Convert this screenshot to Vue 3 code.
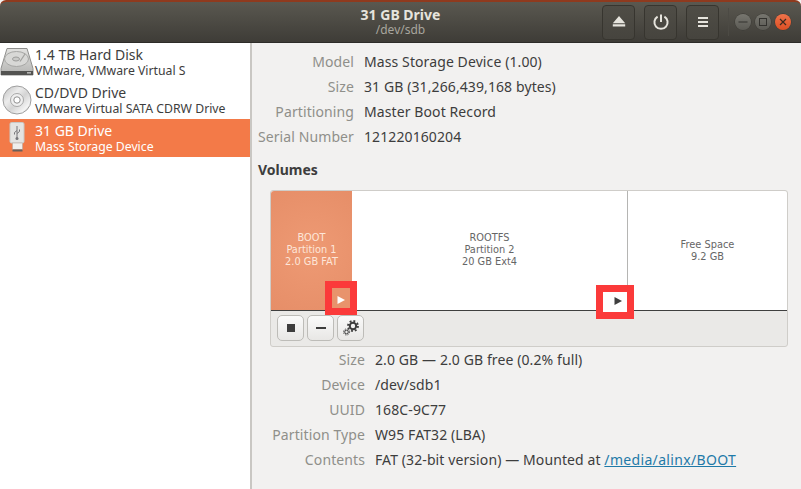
<template>
  <div class="window">
    <header class="titlebar">
      <div class="title-spacer"></div>
      <div class="title">
        <div class="title-main">31 GB Drive</div>
        <div class="title-sub">/dev/sdb</div>
      </div>
      <div class="title-actions">
        <button class="hbtn">
          <svg width="16" height="16" viewBox="0 0 16 16"><path d="M8 2 14.2 9.2H1.8Z M1.8 10.2H14.2V12.4H1.8Z" fill="#e6e4dd"/></svg>
        </button>
        <button class="hbtn">
          <svg width="18" height="18" viewBox="0 0 18 18" fill="none" stroke="#e6e4dd" stroke-width="2"><path d="M5.6 3.6a6.6 6.6 0 1 0 6.8 0"/><path d="M9 1.5V9"/></svg>
        </button>
        <button class="hbtn">
          <svg width="16" height="16" viewBox="0 0 16 16" fill="#e6e4dd"><rect x="3" y="3" width="10" height="2"/><rect x="3" y="7" width="10" height="2"/><rect x="3" y="11" width="10" height="2"/></svg>
        </button>
        <div class="hsep"></div>
        <div class="wm">
          <span class="wm-btn"><svg width="16" height="16" viewBox="0 0 16 16"><rect x="3.5" y="7.5" width="9" height="1" fill="#33322e"/></svg></span>
          <span class="wm-btn"><svg width="16" height="16" viewBox="0 0 16 16"><rect x="4.5" y="4.5" width="7" height="7" fill="none" stroke="#33322e"/></svg></span>
          <span class="wm-btn wm-close"><svg width="16" height="16" viewBox="0 0 16 16"><path d="M5 5 11 11M11 5 5 11" stroke="#3c2a20" stroke-width="1.2"/></svg></span>
        </div>
      </div>
    </header>

    <div class="body">
      <aside class="sidebar">
        <div v-for="d in drives" :key="d.name" class="drive" :class="{ selected: d.selected }">
          <div class="drive-icon">
            <svg v-if="d.icon === 'hdd'" width="34" height="34" viewBox="0 0 34 34">
              <defs>
                <linearGradient id="hddBody" x1="0" y1="0" x2="0" y2="1">
                  <stop offset="0" stop-color="#e2e2e0"/>
                  <stop offset="1" stop-color="#b4b4b2"/>
                </linearGradient>
              </defs>
              <path d="M7 3.5H27L33 23.5V30H1V23.5Z" fill="url(#hddBody)" stroke="#8f8f8d"/>
              <ellipse cx="16.5" cy="14" rx="12" ry="7.5" fill="#d8d8d6" stroke="#a6a6a4"/>
              <ellipse cx="16" cy="14" rx="3.5" ry="2" fill="#cacac8" stroke="#9c9c9a"/>
              <path d="M25 9 20 16.5" stroke="#a0a09e" stroke-width="1.2"/>
              <rect x="1" y="26" width="32" height="4" fill="#535351"/>
              <rect x="27" y="27" width="4" height="1.6" fill="#b5b5b3"/>
            </svg>
            <svg v-else-if="d.icon === 'cd'" width="34" height="34" viewBox="0 0 34 34">
              <defs>
                <linearGradient id="disc" x1="0" y1="0" x2="1" y2="1">
                  <stop offset="0" stop-color="#bdbdbd"/>
                  <stop offset=".35" stop-color="#ececec"/>
                  <stop offset=".55" stop-color="#d4d4d4"/>
                  <stop offset=".8" stop-color="#f4f4f4"/>
                  <stop offset="1" stop-color="#b8b8b8"/>
                </linearGradient>
              </defs>
              <circle cx="17" cy="17" r="14" fill="url(#disc)" stroke="#9f9f9f"/>
              <circle cx="17" cy="17" r="6.5" fill="#efefef" stroke="#a8a8a8"/>
              <circle cx="17" cy="17" r="3.2" fill="#fff" stroke="#8f8f8f"/>
            </svg>
            <svg v-else width="34" height="34" viewBox="0 0 34 34">
              <rect x="10" y="1.5" width="14" height="20.5" rx="1.5" fill="#e4e4e2" stroke="#c8c8c6"/>
              <path d="M17 5V17M17 9.5 14.5 11.5V13.5M17 12.5 19.5 10.5V8.5" fill="none" stroke="#77777a" stroke-width="1"/>
              <circle cx="17" cy="17.5" r="1.5" fill="#77777a"/>
              <rect x="12.5" y="22" width="10" height="6.5" fill="#efefed" stroke="#b8a89e" stroke-width=".6"/>
              <rect x="12.5" y="28.5" width="10" height="2" fill="#6a5f59"/>
            </svg>
          </div>
          <div class="drive-text">
            <div class="drive-name">{{ d.name }}</div>
            <div class="drive-desc">{{ d.desc }}</div>
          </div>
        </div>
      </aside>

      <main class="content">
        <section class="props">
          <template v-for="p in driveProps" :key="p.label">
            <div class="prop-label">{{ p.label }}</div>
            <div class="prop-value">{{ p.value }}</div>
          </template>
        </section>

        <h2 class="volumes-title">Volumes</h2>

        <div class="volumes">
          <div class="graph">
            <div class="seg seg-boot">
              <div>BOOT</div>
              <div>Partition 1</div>
              <div>2.0 GB FAT</div>
            </div>
            <div class="seg seg-root">
              <div>ROOTFS</div>
              <div>Partition 2</div>
              <div>20 GB Ext4</div>
            </div>
            <div class="seg seg-free">
              <div>Free Space</div>
              <div>9.2 GB</div>
            </div>
          </div>
          <div class="toolbar">
            <button class="tbtn">
              <svg width="16" height="16" viewBox="0 0 16 16"><rect x="4" y="4" width="8" height="8" fill="#3d3d3d"/></svg>
            </button>
            <button class="tbtn">
              <svg width="16" height="16" viewBox="0 0 16 16"><rect x="3" y="7" width="10" height="2" fill="#3d3d3d"/></svg>
            </button>
            <button class="tbtn">
              <svg width="18" height="18" viewBox="0 0 18 18">
                <circle cx="11" cy="7" r="3.2" fill="none" stroke="#3d3d3d" stroke-width="2"/>
                <circle cx="11" cy="7" r="5" fill="none" stroke="#3d3d3d" stroke-width="1.8" stroke-dasharray="1.9 2"/>
                <circle cx="4.5" cy="13" r="1.8" fill="none" stroke="#3d3d3d" stroke-width="1"/>
                <circle cx="4.5" cy="13" r="3" fill="none" stroke="#3d3d3d" stroke-width="1" stroke-dasharray="1.2 1.2"/>
              </svg>
            </button>
          </div>
          <div class="marker marker-boot"><svg width="10" height="10" viewBox="0 0 10 10"><path d="M1.5 1 9 5 1.5 9Z" fill="#fff"/></svg></div>
          <div class="marker marker-root"><svg width="10" height="10" viewBox="0 0 10 10"><path d="M1.5 1 9 5 1.5 9Z" fill="#3f3f3f"/></svg></div>
        </div>

        <section class="props props-volume">
          <template v-for="p in volumeProps" :key="p.label">
            <div class="prop-label">{{ p.label }}</div>
            <div class="prop-value">
              {{ p.value }}<a v-if="p.link" href="#" class="link" @click.prevent>{{ p.link }}</a>
            </div>
          </template>
        </section>
      </main>
    </div>
  </div>
</template>

<script setup>
const drives = [
  { name: '1.4 TB Hard Disk', desc: 'VMware, VMware Virtual S', icon: 'hdd' },
  { name: 'CD/DVD Drive', desc: 'VMware Virtual SATA CDRW Drive', icon: 'cd' },
  { name: '31 GB Drive', desc: 'Mass Storage Device', icon: 'usb', selected: true },
];

const driveProps = [
  { label: 'Model', value: 'Mass Storage Device (1.00)' },
  { label: 'Size', value: '31 GB (31,266,439,168 bytes)' },
  { label: 'Partitioning', value: 'Master Boot Record' },
  { label: 'Serial Number', value: '121220160204' },
];

const volumeProps = [
  { label: 'Size', value: '2.0 GB — 2.0 GB free (0.2% full)' },
  { label: 'Device', value: '/dev/sdb1' },
  { label: 'UUID', value: '168C-9C77' },
  { label: 'Partition Type', value: 'W95 FAT32 (LBA)' },
  { label: 'Contents', value: 'FAT (32-bit version) — Mounted at ', link: '/media/alinx/BOOT' },
];
</script>

<style>
html, body {
  margin: 0;
  overflow: hidden;
}
</style>

<style scoped>
.window {
  width: 801px;
  height: 489px;
  display: flex;
  flex-direction: column;
  overflow: hidden;
  font-family: "Noto Sans", "Open Sans", sans-serif;
  font-size: 14px;
  color: #3d3d3d;
  background: #f2f1f0;
}

/* header */
.titlebar {
  height: 43px;
  flex: none;
  box-sizing: border-box;
  display: flex;
  align-items: center;
  border-top: 2px solid #8f3a1e;
  border-radius: 6px 6px 0 0;
  background: linear-gradient(#5a5850, #3e3c37);
  border-bottom: 1px solid #2d2c29;
}
.title-spacer {
  flex: 1 1 0;
  padding-left: 10px;
}
.title {
  text-align: center;
  line-height: 15px;
  width: 200px;
}
.title-main {
  color: #e6e4dd;
  font-size: 14px;
  font-weight: 700;
}
.title-sub {
  color: #a8a69e;
  font-size: 12px;
}
.title-actions {
  flex: 1 1 0;
  display: flex;
  justify-content: flex-end;
  align-items: center;
  padding-right: 10px;
}
.hbtn {
  width: 33px;
  height: 35px;
  margin-right: 9px;
  padding: 0;
  display: flex;
  align-items: center;
  justify-content: center;
  border: 1px solid #37352f;
  border-radius: 4px;
  background: linear-gradient(#4f4d46, #46443e);
}
.hsep {
  width: 1px;
  height: 28px;
  background: #4c4a44;
  margin-right: 6px;
}
.wm {
  display: flex;
  gap: 4px;
}
.wm-btn {
  width: 16px;
  height: 16px;
  border-radius: 50%;
  box-shadow: 0 0 0 0.5px #3a3934;
  background: linear-gradient(#77766f, #5b5a54);
  display: flex;
}
.wm-close {
  background: linear-gradient(#f0734a, #dc4f24);
}

/* sidebar */
.body {
  flex: 1;
  display: flex;
  min-height: 0;
}
.sidebar {
  width: 250px;
  flex: none;
  background: #fff;
  border-right: 2px solid #c9c7c3;
}
.drive {
  height: 38px;
  display: flex;
  align-items: center;
  gap: 1px;
}
.drive.selected {
  background: #f37a48;
  color: #fff;
}
.drive-icon {
  width: 34px;
  height: 34px;
  flex: none;
}
.drive-text {
  white-space: nowrap;
  line-height: 16px;
  margin-top: 2px;
}
.drive-name {
  font-size: 14px;
}
.drive-desc {
  font-size: 12.25px;
}

/* main */
.content {
  flex: 1;
  min-width: 0;
  padding-top: 6px;
}
.props {
  display: grid;
  grid-template-columns: 102px 1fr;
  column-gap: 10px;
  grid-auto-rows: 25px;
  align-items: center;
}
.prop-label {
  text-align: right;
  color: #8f8f8a;
  white-space: nowrap;
  letter-spacing: 0.1px;
}
.prop-value {
  white-space: pre-wrap;
  color: #3d3d3d;
  letter-spacing: 0.1px;
}
.volumes-title {
  margin: 11px 0 0 6px;
  height: 20px;
  line-height: 20px;
  font-size: 14px;
  font-weight: 700;
  color: #3d3d3d;
}
.volumes {
  position: relative;
  margin: 10px 0 0 18px;
  width: 518px;
  height: 157px;
  box-sizing: border-box;
  border: 1px solid #cfcdc9;
  border-radius: 3px;
  background: #eae9e7;
}
.graph {
  height: 120px;
  box-sizing: border-box;
  display: flex;
  background: #fff;
  border-bottom: 1px solid #3f3f3f;
  border-radius: 3px 3px 0 0;
  overflow: hidden;
}
.seg {
  display: flex;
  flex-direction: column;
  align-items: center;
  justify-content: center;
  font-family: "DejaVu Sans", sans-serif;
  font-size: 9.8px;
  line-height: 12px;
  color: #666;
  padding-bottom: 1px;
  box-sizing: border-box;
}
.seg-boot {
  width: 81px;
  background: radial-gradient(circle at 50% 50%, #ee9a74, #e68e68);
  color: #fde6d9;
}
.seg-root {
  width: 276px;
  border-right: 1px solid #b5b5b3;
}
.seg-free {
  flex: 1;
  padding-top: 1px;
}
.toolbar {
  display: flex;
  gap: 3px;
  padding: 4px 6px;
}
.tbtn {
  width: 27px;
  height: 26px;
  padding: 0;
  display: flex;
  align-items: center;
  justify-content: center;
  border: 1px solid #bdbcb8;
  border-radius: 5px;
  background: linear-gradient(#fafafa, #e8e7e5);
}
.marker {
  position: absolute;
  display: flex;
  align-items: center;
  justify-content: center;
  box-sizing: border-box;
  border: 7px solid #fb3a3a;
}
.marker-boot {
  left: 54px;
  top: 90px;
  width: 32px;
  height: 34px;
  padding-top: 4px;
  background: #e8936c;
}
.marker-root {
  left: 325px;
  top: 94px;
  width: 38px;
  height: 34px;
  padding: 0 0 3px 5px;
  background: #fff;
}
.props-volume {
  grid-template-columns: 113px 1fr;
}
.link {
  color: #1f7aa8;
  text-decoration: underline;
  letter-spacing: 0.33px;
}
</style>
